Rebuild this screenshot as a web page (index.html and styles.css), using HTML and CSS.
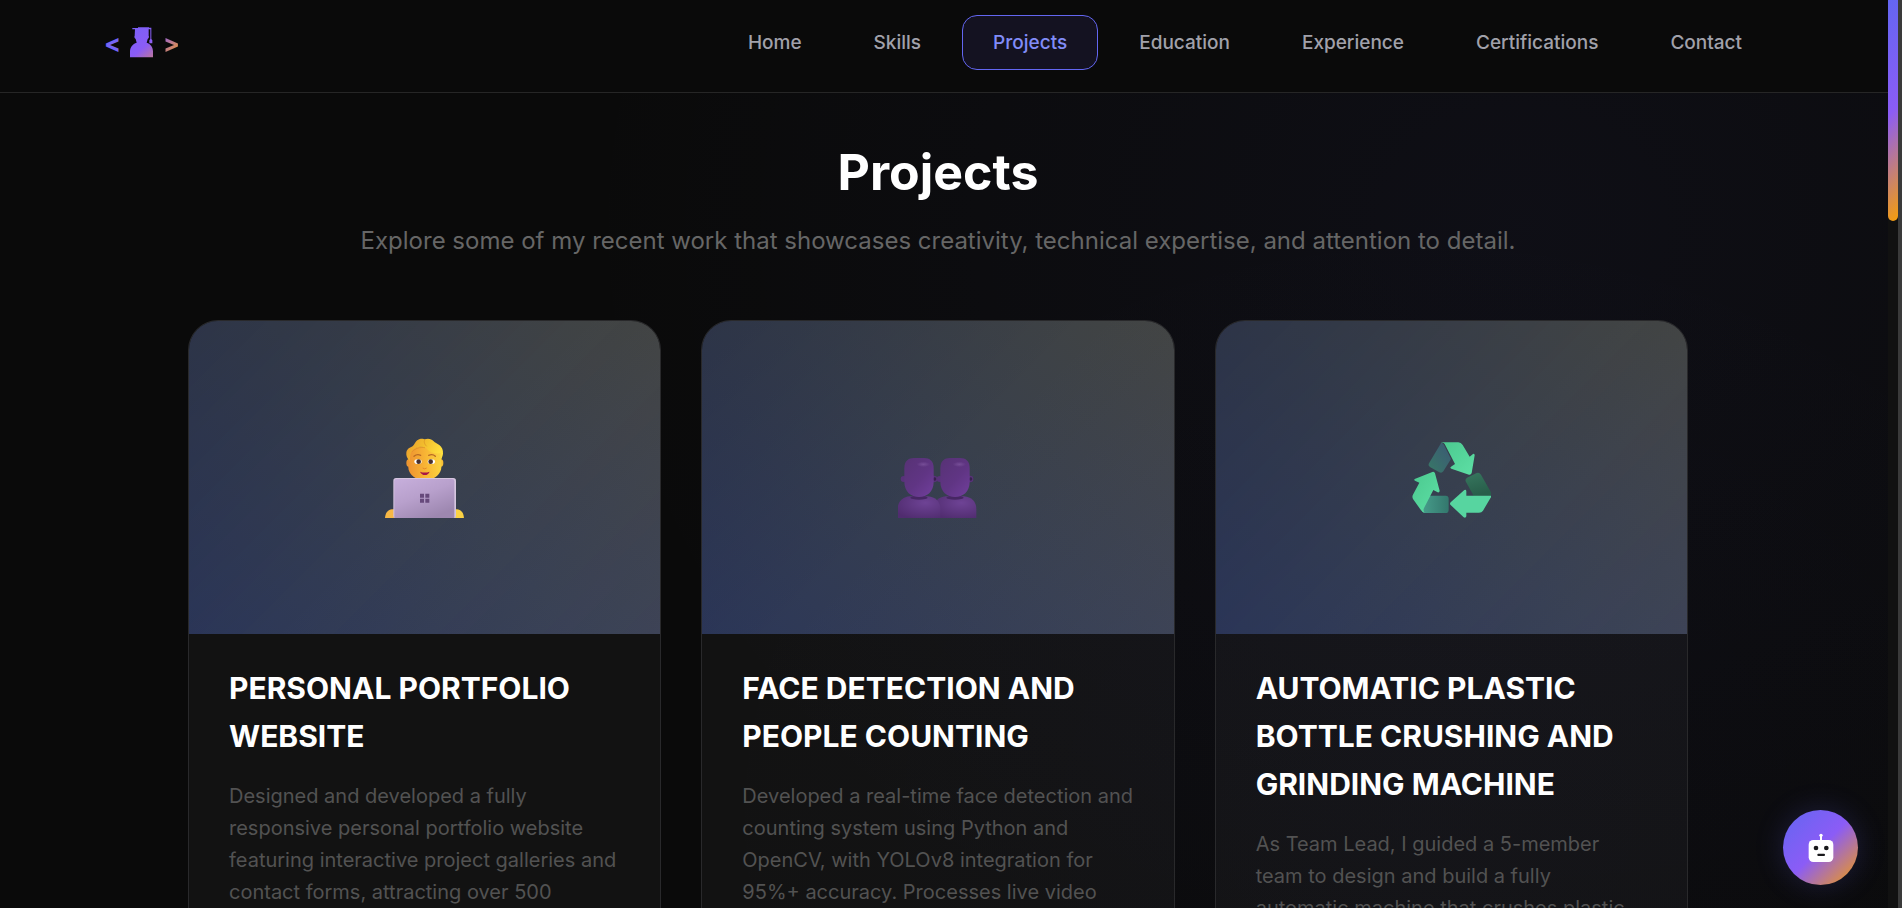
FILE: index.html
```html
<!DOCTYPE html>
<html lang="en">
<head>
<meta charset="utf-8">
<title>Projects</title>
<link rel="stylesheet" href="styles.css">
</head>
<body>
<header class="header">
  <nav class="nav" aria-label="Main">
    <a class="logo" href="#home" aria-label="Home page">
      <span class="logo-open">&lt;</span>
      <svg class="logo-icon" viewBox="149 80 72 93" aria-hidden="true">
        <defs><linearGradient id="lg" gradientUnits="userSpaceOnUse" x1="150" y1="80" x2="235" y2="180"><stop offset="0" stop-color="#7a60f7"/><stop offset=".55" stop-color="#8b5cf6"/><stop offset="1" stop-color="#cf8078"/></linearGradient></defs>
        <g fill="url(#lg)"><path d="M156 83h17v-2h33v1h7v34l3 4v9h-9v-9l3-4V87h-5v19q2 3 0 7l-3 3-3 11c12 3 19 14 19 26v18h-69v-18c0-12 8-23 20-26l-3-11-3-3q-2-4 0-7l1-19h-8z"/></g>
      </svg>
      <span class="logo-close">&gt;</span>
    </a>
    <ul class="menu">
      <li><a class="menu-link" href="#home">Home</a></li>
      <li><a class="menu-link" href="#skills">Skills</a></li>
      <li><a class="menu-link active" href="#projects" aria-current="page">Projects</a></li>
      <li><a class="menu-link" href="#education">Education</a></li>
      <li><a class="menu-link" href="#experience">Experience</a></li>
      <li><a class="menu-link" href="#certifications">Certifications</a></li>
      <li><a class="menu-link" href="#contact">Contact</a></li>
    </ul>
  </nav>
</header>

<main class="section" id="projects">
  <h1 class="section-title">Projects</h1>
  <p class="section-subtitle">Explore some of my recent work that showcases creativity, technical expertise, and attention to detail.</p>
  <div class="grid">
    <article class="card">
      <div class="card-image">
        <svg class="emoji" viewBox="45 40 240 240" role="img" aria-label="Technologist">
          <defs>
            <linearGradient id="skin" x1="0" x2="1"><stop offset="0" stop-color="#ee9331"/><stop offset=".55" stop-color="#f8b735"/><stop offset="1" stop-color="#fbd33f"/></linearGradient>
            <linearGradient id="hair" x1="0" x2="1" y2=".3"><stop offset="0" stop-color="#e99a2e"/><stop offset=".5" stop-color="#f2bd2d"/><stop offset="1" stop-color="#ffdf3e"/></linearGradient>
            <linearGradient id="lap" x2=".6" y2="1"><stop offset="0" stop-color="#c7afdc"/><stop offset=".5" stop-color="#b8a0cc"/><stop offset="1" stop-color="#9d87b0"/></linearGradient>
          </defs>
          <path fill="#f7b846" d="M45 281c1-17 9-26 21-27h10v27z"/><path fill="#fbd245" d="M252 281v-27h9c12 1 20 10 21 27z"/>
          <ellipse cx="116" cy="115" rx="7" ry="11" fill="#eb9630"/><ellipse cx="213" cy="115" rx="7" ry="11" fill="#f8bf36"/>
          <path fill="url(#skin)" d="M115 92c2-16 18-28 49-28s49 12 50 28v36c0 17-18 35-34 35h-31c-17 0-34-18-34-35z"/>
          <path fill="url(#hair)" d="M116 105c-5-5-8-13-7-20 0-10 8-16 16-19 8-2 9-14 18-20 8-6 18-4 21-2 11-4 21-1 27 6 4 5 10 6 17 11 8 6 12 15 11 26-1 7-3 12-6 17l-2-18c-16 2-32-3-43-16-12-8-33-3-41 7-7 9-6 19-8 35z"/>
          <path d="M165 45c-5 6-1 14 5 20M127 81c8-10 23-14 38-12" fill="none" stroke="#d58c27" stroke-width="3" opacity=".6"/>
          <path d="M132 95q9-8 20-3M176 92q12-5 20 3" fill="none" stroke="#b86924" stroke-width="4" stroke-linecap="round"/>
          <ellipse cx="144" cy="111" rx="11" ry="7" fill="#fff"/><ellipse cx="184" cy="111" rx="11" ry="7" fill="#fff"/>
          <circle cx="146" cy="111" r="7" fill="#48302f"/><circle cx="182" cy="111" r="7" fill="#48302f"/>
          <path d="M158 130q6 5 12 0" fill="none" stroke="#e58b2a" stroke-width="3"/>
          <path d="M150 141q14 5 29 0-5 10-14 10-10 0-15-10z" fill="#a71546"/>
          <rect x="70" y="160" width="188" height="121" rx="8" fill="#d5c5df"/><path d="M73 281V170q0-7 7-7h166q7 0 7 7v111z" fill="url(#lap)"/>
          <path fill="#674a7c" d="M150 207h12v12h-12zm16 0h12v12h-12zm-16 15h12v12h-12zm16 0h12v12h-12z"/>
        </svg>
      </div>
      <div class="card-body">
        <h2 class="card-title">PERSONAL PORTFOLIO WEBSITE</h2>
        <p class="card-text">Designed and developed a fully responsive personal portfolio website featuring interactive project galleries and contact forms, attracting over 500</p>
      </div>
    </article>
    <article class="card">
      <div class="card-image">
        <svg class="emoji" viewBox="53 -3 240 240" role="img" aria-label="Two people in silhouette">
          <defs>
            <linearGradient id="head" x2=".8" y2="1"><stop offset="0" stop-color="#573275"/><stop offset=".6" stop-color="#603584"/><stop offset="1" stop-color="#6e3d98"/></linearGradient>
            <radialGradient id="bust" cx=".65" cy=".3" r=".8"><stop offset="0" stop-color="#6e4395"/><stop offset="1" stop-color="#502c6f"/></radialGradient>
            <radialGradient id="shine"><stop offset="0" stop-color="#8058a1"/><stop offset="1" stop-color="#8058a1" stop-opacity="0"/></radialGradient>
            <g id="person">
              <path fill="url(#bust)" d="M52 237v-27c0-22 15-36 36-38h55c22 2 37 16 37 38v27z"/>
              <ellipse cx="116" cy="176" rx="26" ry="6" fill="#462763"/>
              <circle cx="70" cy="120" r="9" fill="#58327a"/><circle cx="161" cy="120" r="10" fill="#58327a"/><circle cx="163" cy="120" r="5" fill="#39214f"/>
              <path fill="url(#head)" d="M72 88C72 66 84 57 101 57H131C148 57 160 66 160 88V128C160 158 140 174 116 174S72 158 72 128Z"/>
              <ellipse cx="129" cy="76" rx="20" ry="8" fill="url(#shine)" opacity=".7"/>
            </g>
          </defs>
          <use href="#person" x="108"/><use href="#person"/>
        </svg>
      </div>
      <div class="card-body">
        <h2 class="card-title">FACE DETECTION AND PEOPLE COUNTING</h2>
        <p class="card-text">Developed a real-time face detection and counting system using Python and OpenCV, with YOLOv8 integration for 95%+ accuracy. Processes live video</p>
      </div>
    </article>
    <article class="card">
      <div class="card-image">
        <svg class="emoji" viewBox="34 25 240 240" role="img" aria-label="Recycling">
          <defs>
            <linearGradient id="g1" x2="1" y2="1"><stop offset="0" stop-color="#4bc98f"/><stop offset="1" stop-color="#5edfa5"/></linearGradient>
            <linearGradient id="g2" x1="1" x2="0" y2="1"><stop offset="0" stop-color="#3c5875"/><stop offset="1" stop-color="#377866"/></linearGradient>
            <linearGradient id="g3" x2="1"><stop offset="0" stop-color="#479c8a"/><stop offset="1" stop-color="#33776d"/></linearGradient>
            <linearGradient id="g4" y2="1" x2=".3"><stop offset="0" stop-color="#37775f"/><stop offset="1" stop-color="#285e4a"/></linearGradient>
          </defs>
          <path fill="url(#g2)" d="M123 42q5-5 10 4l21 42-23 37q-5 7-12 3l-27-15q-8-5-4-12z"/>
          <path fill="url(#g1)" d="M123 42q3-4 8-4h45q8 0 13 8l21 35 10-8q5-2 5 4l-9 53q-2 6-8 5l-53-18q-6-3-1-6l12-8-31-60q-5-7-12-1z"/>
          <path fill="url(#g4)" d="M202 144l29-14q8-3 13 5l29 51q3 6 0 12h-51l-23-41q-4-8 3-13z"/>
          <path fill="#57d5a0" d="M274 197q1 5-2 9l-22 37q-4 6-12 6h-38v11q-2 7-8 3l-39-37q-4-4 0-8l41-37q6-3 6 4v13h74z"/>
          <path fill="url(#g3)" d="M78 198h60q9 0 9 9v33q0 10-9 10H76q-11 0-7-12z"/>
          <path fill="url(#g1)" d="M45 148l53-21q6-2 8 4l14 52q0 6-6 5l-13-7-26 50q-7 11 0 18-7-1-12-9L40 208q-4-7 1-15l18-34-13-6q-4-2-1-5z"/>
        </svg>
      </div>
      <div class="card-body">
        <h2 class="card-title">AUTOMATIC PLASTIC BOTTLE CRUSHING AND GRINDING MACHINE</h2>
        <p class="card-text">As Team Lead, I guided a 5-member team to design and build a fully automatic machine that crushes plastic</p>
      </div>
    </article>
  </div>
</main>

<button class="chat" type="button" aria-label="Open chat assistant">
  <svg class="chat-icon" viewBox="172 154 78 88" aria-hidden="true">
    <path d="M211 160v18" stroke="#fff" stroke-width="6"/><circle cx="211" cy="160" r="5" fill="#fff"/>
    <rect x="174" y="174" width="74" height="66" rx="14" fill="#fff"/>
    <circle cx="196" cy="198" r="7" fill="#18181b"/><circle cx="227" cy="198" r="7" fill="#18181b"/>
    <rect x="200" y="215" width="23" height="7" rx="3" fill="#18181b"/>
  </svg>
</button>
<div class="scrollbar" aria-hidden="true"><div class="scrollbar-thumb"></div></div>
</body>
</html>
```
FILE: styles.css
```css
* { box-sizing: border-box; margin: 0; padding: 0; }

body {
  height: 100vh;
  overflow: hidden;
  padding-right: 14px;
  background:
    radial-gradient(ellipse 50% 90% at 80% 25%, rgba(99, 102, 241, 0.05), transparent),
    radial-gradient(ellipse 40% 70% at 75% 90%, rgba(99, 102, 241, 0.02), transparent),
    #0a0a0a;
  color: #fff;
  font-family: Inter, "Liberation Sans", sans-serif;
}

.header {
  height: 93px;
  padding: 15px 115px 0 104px;
  background: #0a0a0a;
  border-bottom: 1px solid #262626;
}

.nav { display: flex; align-items: flex-start; justify-content: space-between; }

.logo {
  display: flex;
  align-items: center;
  gap: 9px;
  height: 55px;
  font-size: 25px;
  font-weight: 700;
  text-decoration: none;
}
.logo-icon { width: 24px; height: 31px; }
.logo-open { color: #7565f5; }
.logo-close {
  background: linear-gradient(135deg, #a56cc0 30%, #d98c55 70%);
  background-clip: text;
  color: transparent;
}

.menu { display: flex; gap: 10px; list-style: none; }
.menu-link {
  display: block;
  padding: 0 30px;
  border: 1px solid transparent;
  border-radius: 15px;
  color: #a1a1aa;
  font-size: 19px;
  font-weight: 500;
  line-height: 53px;
  text-decoration: none;
}
.menu-link.active { border-color: #6366f1; background: #141221; color: #818cf8; }

.section { padding: 48px 24px 0 12px; text-align: center; }
.section-title { font-size: 50px; font-weight: 700; line-height: 62px; }
.section-subtitle { margin-top: 18px; color: #666; font-size: 24px; line-height: 40px; }

.grid {
  display: grid;
  grid-template-columns: repeat(3, 1fr);
  gap: 40px;
  max-width: 1500px;
  margin: 59px auto 0;
  text-align: left;
}
.card {
  overflow: hidden;
  border: 1px solid #29292b;
  border-radius: 30px;
  background: rgba(255, 255, 255, 0.035);
}
.card-image {
  display: flex;
  align-items: center;
  justify-content: center;
  height: 313px;
  background:
    linear-gradient(135deg, rgba(0, 0, 20, 0.15), transparent 50%, rgba(120, 120, 255, 0.06)),
    linear-gradient(45deg, #2c3759, #373f4e 50%, #424442);
}
.emoji { width: 80px; height: 80px; }
.card-body { padding: 30px 40px; }
.card-title { font-size: 30px; font-weight: 700; line-height: 48px; }
.card-text { margin-top: 20px; color: #525252; font-size: 20px; line-height: 32px; }

.chat {
  position: fixed;
  right: 44px;
  bottom: 23px;
  display: grid;
  place-items: center;
  width: 75px;
  height: 75px;
  border: 0;
  border-radius: 50%;
  background: linear-gradient(135deg, #6366f1, #8b5cf6 50%, #f59e0b);
  box-shadow: 0 0 30px rgba(99, 102, 241, 0.2);
}
.chat-icon { width: 26px; height: 30px; }

.scrollbar {
  position: fixed;
  top: 0;
  right: 0;
  bottom: 0;
  width: 14px;
  border-right: 4px solid #3a3a3a;
  background: #111;
}
.scrollbar-thumb {
  height: 221px;
  border-radius: 0 0 5px 5px;
  background: linear-gradient(135deg, #6366f1, #8b5cf6 50%, #f59e0b);
}
```
